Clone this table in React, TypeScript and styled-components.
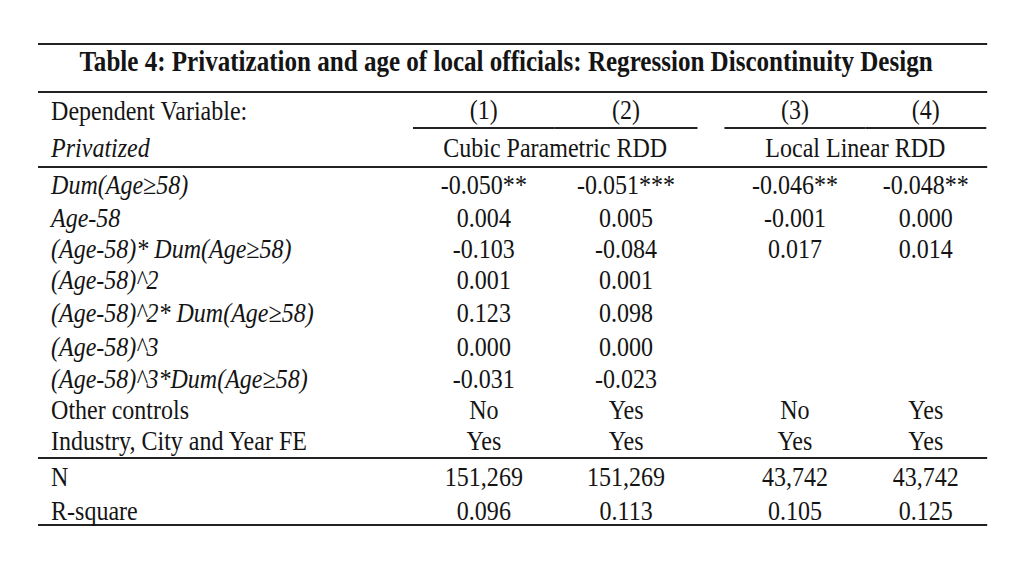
import React from 'react'
import styled, { createGlobalStyle } from 'styled-components'

const GlobalStyle = createGlobalStyle`
    html, body {
        margin: 0;
        padding: 0;
        background: #ffffff;
    }
    body {
        font-family: 'Liberation Serif', 'Times New Roman', serif;
        color: #141414;
    }
`

// the slide text is set narrow, so the whole sheet is squeezed horizontally
const Sheet = styled.div`
    width: 1091px;
    margin: 43px 0 0 38px;
    transform: scaleX(0.87);
    transform-origin: 0 0;
    font-size: 27.6px;
`

const Title = styled.h1`
    margin: 0;
    height: 50px;
    box-sizing: border-box;
    border-top: 2px solid #222;
    border-bottom: 2px solid #222;
    padding-right: 15px;
    font-size: 28.8px;
    font-weight: 700;
    line-height: 32px;
    text-align: center;
`

const Row = styled.div<{ $h: number; $rule?: boolean }>`
    display: grid;
    grid-template-columns: 431px 163px 164px 31px 162px 139px;
    height: ${(p) => p.$h}px;
    box-sizing: border-box;
    border-bottom: ${(p) => (p.$rule ? '2px solid #222' : 'none')};
`

const Label = styled.div<{ $italic?: boolean }>`
    display: flex;
    align-items: center;
    padding-left: 15px;
    font-style: ${(p) => (p.$italic ? 'italic' : 'normal')};
    white-space: nowrap;
`

const Cell = styled.div<{ $underline?: boolean; $span?: number }>`
    display: flex;
    align-items: center;
    justify-content: center;
    white-space: nowrap;
    grid-column: ${(p) => (p.$span ? `span ${p.$span}` : 'auto')};
    box-sizing: border-box;
    border-bottom: ${(p) => (p.$underline ? '2px solid #222' : 'none')};
`

const Gap = styled.div``

type DataRow = {
    label: string
    italic?: boolean
    h: number
    rule?: boolean
    values: [string, string, string, string]
}

const rows: DataRow[] = [
    { label: 'Dum(Age≥58)', italic: true, h: 34, values: ['-0.050**', '-0.051***', '-0.046**', '-0.048**'] },
    { label: 'Age-58', italic: true, h: 31, values: ['0.004', '0.005', '-0.001', '0.000'] },
    { label: '(Age-58)* Dum(Age≥58)', italic: true, h: 31, values: ['-0.103', '-0.084', '0.017', '0.014'] },
    { label: '(Age-58)^2', italic: true, h: 32, values: ['0.001', '0.001', '', ''] },
    { label: '(Age-58)^2* Dum(Age≥58)', italic: true, h: 34, values: ['0.123', '0.098', '', ''] },
    { label: '(Age-58)^3', italic: true, h: 33, values: ['0.000', '0.000', '', ''] },
    { label: '(Age-58)^3*Dum(Age≥58)', italic: true, h: 31, values: ['-0.031', '-0.023', '', ''] },
    { label: 'Other controls', h: 31, values: ['No', 'Yes', 'No', 'Yes'] },
    { label: 'Industry, City and Year FE', h: 34, rule: true, values: ['Yes', 'Yes', 'Yes', 'Yes'] },
    { label: 'N', h: 36, values: ['151,269', '151,269', '43,742', '43,742'] },
    { label: 'R-square', h: 31, rule: true, values: ['0.096', '0.113', '0.105', '0.125'] },
]

export default function App() {
    return (
        <>
            <GlobalStyle />
            <Sheet>
                <Title>Table 4: Privatization and age of local officials: Regression Discontinuity Design</Title>

                <Row $h={36}>
                    <Label>Dependent Variable:</Label>
                    <Cell $underline>(1)</Cell>
                    <Cell $underline>(2)</Cell>
                    <Gap />
                    <Cell $underline>(3)</Cell>
                    <Cell $underline>(4)</Cell>
                </Row>
                <Row $h={39} $rule>
                    <Label $italic>Privatized</Label>
                    <Cell $span={2}>Cubic Parametric RDD</Cell>
                    <Gap />
                    <Cell $span={2}>Local Linear RDD</Cell>
                </Row>

                {rows.map((row) => (
                    <Row key={row.label} $h={row.h} $rule={row.rule}>
                        <Label $italic={row.italic}>{row.label}</Label>
                        <Cell>{row.values[0]}</Cell>
                        <Cell>{row.values[1]}</Cell>
                        <Gap />
                        <Cell>{row.values[2]}</Cell>
                        <Cell>{row.values[3]}</Cell>
                    </Row>
                ))}
            </Sheet>
        </>
    )
}
